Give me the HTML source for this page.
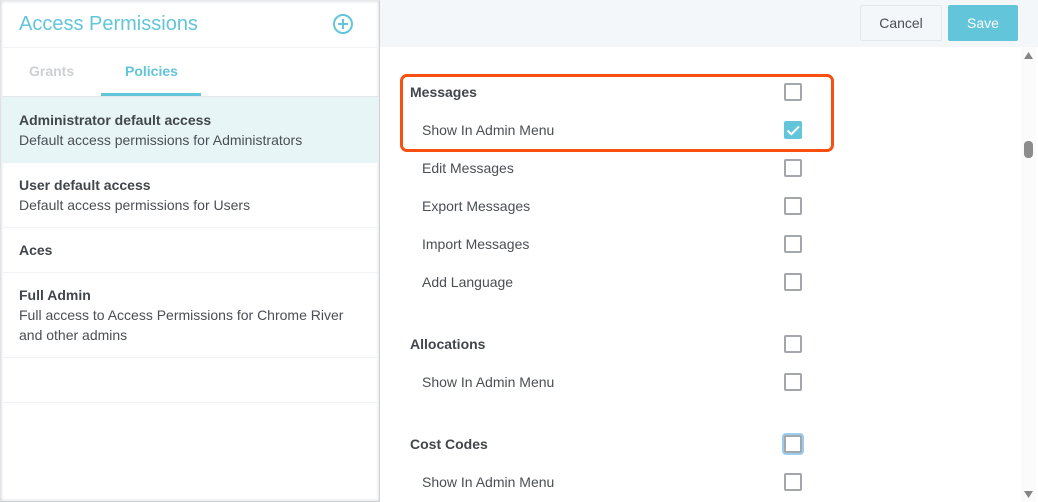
<!DOCTYPE html>
<html><head><meta charset="utf-8">
<style>
html,body{margin:0;padding:0;background:#fff}
body{width:1038px;height:502px;position:relative;overflow:hidden;font-family:"Liberation Sans",sans-serif;color:#4a4f55;font-size:14px}
.a{position:absolute;white-space:nowrap}
.b{font-weight:bold;color:#41464c}
.cb{position:absolute;left:784px;width:14px;height:14px;border:2px solid #a3a7ab;border-radius:2px;background:#fff}
.ln{position:absolute;left:2px;width:376px;height:1px;background:#f2f3f4}
.lbl{position:absolute;white-space:nowrap;left:422px;line-height:18px}
.hd{position:absolute;white-space:nowrap;left:410px;line-height:18px;font-weight:bold;color:#41464c}
</style></head>
<body>
<div class="a" style="left:379px;top:0;width:659px;height:47px;background:#f3f7fa"></div>
<div class="a" style="left:1021px;top:47px;width:15px;height:455px;background:#fbfbfb"></div>

<!-- left panel -->
<div class="a" style="left:0;top:0;width:380px;height:502px;box-sizing:border-box;border-right:1px solid #cfd2d4;border-bottom:1px solid #cfd2d4;border-left:1px solid #dfe1e3;border-top:1px solid #e6e8e9;box-shadow:inset 0 0 3px #cdd1d4;background:#fff"></div>
<div class="a" style="left:19px;top:12px;font-size:20px;line-height:24px;color:#62c5d9">Access Permissions</div>
<svg class="a" style="left:332px;top:13px" width="22" height="22" viewBox="0 0 22 22"><circle cx="11" cy="11" r="9" fill="none" stroke="#62c5d9" stroke-width="2"/><path d="M11 6v10M6 11h10" stroke="#62c5d9" stroke-width="2" fill="none"/></svg>
<div class="ln" style="top:47px"></div>
<div class="a" style="left:29px;top:63px;font-size:14px;line-height:16px;font-weight:bold;color:#cdd0d3">Grants</div>
<div class="a" style="left:125px;top:63px;font-size:14px;line-height:16px;font-weight:bold;color:#62c5d9">Policies</div>
<div class="a" style="left:101px;top:93px;width:100px;height:3px;background:#62c5d9"></div>
<div class="a" style="left:2px;top:96px;width:376px;height:1px;background:#e4e7e9"></div>
<div class="a" style="left:2px;top:97px;width:376px;height:66px;background:#e8f5f7"></div>
<div class="a b" style="left:19px;top:111px;line-height:18px">Administrator default access</div>
<div class="a" style="left:19px;top:131px;line-height:18px">Default access permissions for Administrators</div>
<div class="a b" style="left:19px;top:176px;line-height:18px">User default access</div>
<div class="a" style="left:19px;top:196px;line-height:18px">Default access permissions for Users</div>
<div class="ln" style="top:227px"></div>
<div class="a b" style="left:19px;top:241px;line-height:18px">Aces</div>
<div class="ln" style="top:272px"></div>
<div class="a b" style="left:19px;top:286px;line-height:18px">Full Admin</div>
<div class="a" style="left:19px;top:305px;line-height:20px">Full access to Access Permissions for Chrome River</div>
<div class="a" style="left:19px;top:325px;line-height:20px">and other admins</div>
<div class="ln" style="top:357px"></div>
<div class="ln" style="top:402px"></div>

<!-- buttons -->
<div class="a" style="left:860px;top:5px;width:80px;height:34px;border:1px solid #e3e7ea;border-radius:2px;text-align:center;line-height:34px;color:#4a4f55">Cancel</div>
<div class="a" style="left:948px;top:5px;width:70px;height:36px;background:#62c5d9;border-radius:2px;text-align:center;line-height:36px;color:#fff">Save</div>

<!-- right list -->
<div class="hd" style="top:83px">Messages</div>
<div class="cb" style="top:83px"></div>
<div class="lbl" style="top:121px">Show In Admin Menu</div>
<div class="cb" style="top:121px;background:#62c5d9;border-color:#62c5d9"></div>
<svg class="a" style="left:784px;top:121px" width="18" height="18" viewBox="0 0 18 18"><path d="M3.500 9.500l3.800 3.700L15 5.500" fill="none" stroke="#fff" stroke-width="2"/></svg>
<div class="lbl" style="top:159px">Edit Messages</div>
<div class="cb" style="top:159px"></div>
<div class="lbl" style="top:197px">Export Messages</div>
<div class="cb" style="top:197px"></div>
<div class="lbl" style="top:235px">Import Messages</div>
<div class="cb" style="top:235px"></div>
<div class="lbl" style="top:273px">Add Language</div>
<div class="cb" style="top:273px"></div>
<div class="hd" style="top:335px">Allocations</div>
<div class="cb" style="top:335px"></div>
<div class="lbl" style="top:373px">Show In Admin Menu</div>
<div class="cb" style="top:373px"></div>
<div class="hd" style="top:435px">Cost Codes</div>
<div class="cb" style="top:435px;box-shadow:0 0 0 2px #9accf0"></div>
<div class="lbl" style="top:473px">Show In Admin Menu</div>
<div class="cb" style="top:473px"></div>

<!-- highlight -->
<div class="a" style="left:400px;top:74px;width:434px;height:78px;box-sizing:border-box;border:3px solid #f9500f;border-radius:7px"></div>

<!-- scrollbar -->
<svg class="a" style="left:1022px;top:47px" width="14" height="455" viewBox="0 0 14 455">
<path d="M2 12L6.500 5l4.500 7z" fill="#868686"/>
<rect x="2" y="94" width="9" height="17" rx="4" fill="#8c8c8c"/>
<path d="M2 444l4.500 7 4.500-7z" fill="#868686"/>
</svg>
</body></html>
